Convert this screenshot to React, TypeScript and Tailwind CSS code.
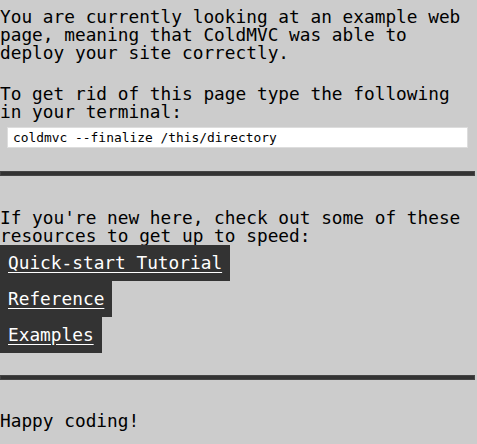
import React from "react";

const links = ["Quick-start Tutorial", "Reference", "Examples"];

export default function App() {
  return (
    <div className="min-h-[444px] w-full bg-[#cccccc] text-black font-['DejaVu_Sans_Mono',monospace] text-[17.8px] leading-[18px] pt-[8px]">
      <p>
        You are currently looking at an example web page, meaning that ColdMVC
        was able to deploy your site correctly.
      </p>
      <p className="mt-[23px]">
        To get rid of this page type the following in your terminal:
      </p>
      <pre className="mt-[6px] ml-[7px] w-[461px] bg-white border border-[#dddddd] px-[5px] py-[2px] text-[12.9px] leading-[15px] font-['DejaVu_Sans_Mono',monospace]">
        coldmvc --finalize /this/directory
      </pre>
      <hr className="mt-[23px] w-[475px] h-[5px] bg-[#333333] border border-[#444444]" />
      <p className="mt-[33px]">
        If you're new here, check out some of these resources to get up to
        speed:
      </p>
      <div className="flex flex-col items-start">
        {links.map((l) => (
          <a
            key={l}
            href="#"
            className="block bg-[#333333] text-white underline underline-offset-[3px] px-[8px] py-[9px]"
          >
            {l}
          </a>
        ))}
      </div>
      <hr className="mt-[22px] w-[475px] h-[5px] bg-[#333333] border border-[#444444]" />
      <p className="mt-[32px]">Happy coding!</p>
    </div>
  );
}
